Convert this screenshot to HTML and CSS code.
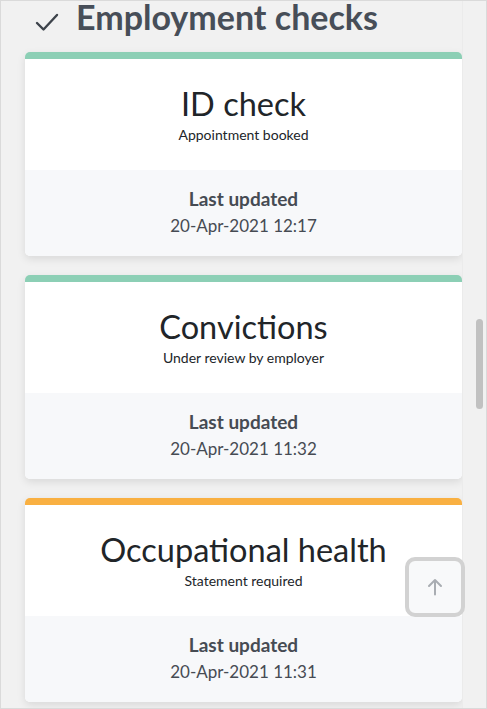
FILE: index.html
```html
<!DOCTYPE html>
<html lang="en">
<head>
<meta charset="utf-8">
<title>Employment checks</title>
<link rel="stylesheet" href="styles.css">
</head>
<body>
<div class="frame">
  <main class="content">
    <h2 class="section-title">
      <svg class="check-icon" width="24" height="20" viewBox="0 0 24 20" aria-hidden="true">
        <path d="M2 11 L8.5 17.5 L22 3" fill="none" stroke="#3d434b" stroke-width="2.4" stroke-linecap="round" stroke-linejoin="round"/>
      </svg>
      <span>Employment checks</span>
    </h2>
    <div class="cards">
      <article class="card card-green">
        <div class="card-body">
          <h3 class="card-title">ID check</h3>
          <p class="card-status">Appointment booked</p>
        </div>
        <div class="card-footer">
          <p class="footer-label">Last updated</p>
          <p class="footer-date">20-Apr-2021 12:17</p>
        </div>
      </article>
      <article class="card card-green">
        <div class="card-body">
          <h3 class="card-title">Convictions</h3>
          <p class="card-status">Under review by employer</p>
        </div>
        <div class="card-footer">
          <p class="footer-label">Last updated</p>
          <p class="footer-date">20-Apr-2021 11:32</p>
        </div>
      </article>
      <article class="card card-orange">
        <div class="card-body">
          <h3 class="card-title">Occupational health</h3>
          <p class="card-status">Statement required</p>
        </div>
        <div class="card-footer">
          <p class="footer-label">Last updated</p>
          <p class="footer-date">20-Apr-2021 11:31</p>
        </div>
      </article>
    </div>
  </main>
  <div class="scrollbar"><div class="thumb"></div></div>
  <button class="back-to-top" aria-label="Back to top">
    <svg width="16" height="18" viewBox="0 0 16 18" aria-hidden="true">
      <path d="M8 16.5 V2 M2 8 L8 2 L14 8" fill="none" stroke="#a9adb2" stroke-width="2" stroke-linecap="round" stroke-linejoin="round"/>
    </svg>
  </button>
</div>
</body>
</html>
```
FILE: styles.css
```css
* { box-sizing: border-box; }
html, body { margin: 0; padding: 0; background: #ffffff; }
body { font-family: Lato, "Noto Sans", sans-serif; }

.frame {
  position: relative;
  width: 487px;
  height: 709px;
  border: 1px solid #dadada;
  display: flex;
  overflow: hidden;
  background: #f1f1f1;
}

.content {
  flex: 1;
  padding: 0 0 0 24px;
  background: #f1f1f1;
  min-width: 0;
}

.section-title {
  display: flex;
  align-items: center;
  margin: 0;
  height: 51px;
  padding: 0 0 19px 10px;
  font-size: 34px;
  font-weight: 700;
  color: #474e58;
  letter-spacing: 0;
  line-height: 36px;
}
.check-icon { margin-right: 17px; margin-top: 10px; flex: none; }

.cards {
  display: flex;
  flex-direction: column;
  gap: 19px;
}

.card {
  background: #ffffff;
  border-radius: 5px;
  box-shadow: 0 3px 9px rgba(0, 0, 0, 0.10);
  overflow: hidden;
  border-top: 7px solid #8ccfb5;
}
.card-orange { border-top-color: #f9b042; }

.card-body {
  height: 111px;
  display: flex;
  flex-direction: column;
  align-items: center;
  padding-top: 26px;
}
.card-title {
  margin: 0;
  font-size: 32.5px;
  font-weight: 400;
  color: #212529;
  line-height: 38px;
}
.card-status {
  margin: 3px 0 0;
  font-size: 14px;
  color: #212529;
  line-height: 17px;
}

.card-footer {
  height: 86px;
  background: #f7f8fa;
  display: flex;
  flex-direction: column;
  align-items: center;
  padding-top: 17px;
}
.footer-label {
  margin: 0;
  font-size: 19px;
  font-weight: 700;
  color: #464b53;
  line-height: 23px;
}
.footer-date {
  margin: 5px 0 0;
  font-size: 17px;
  color: #464b53;
  line-height: 22px;
}

.scrollbar {
  flex: none;
  width: 24px;
  background: #f1f1f1;
  border-left: 1px solid #ebebeb;
  padding: 318px 0 0 13px;
}
.thumb {
  width: 7px;
  height: 90px;
  border-radius: 4px;
  background: #c1c1c1;
}

.back-to-top {
  position: absolute;
  left: 404px;
  top: 556px;
  width: 60px;
  height: 60px;
  border: 4px solid #d2d2d2;
  border-radius: 10px;
  background: #f8f9fa;
  display: flex;
  align-items: center;
  justify-content: center;
  padding: 0;
}
```
